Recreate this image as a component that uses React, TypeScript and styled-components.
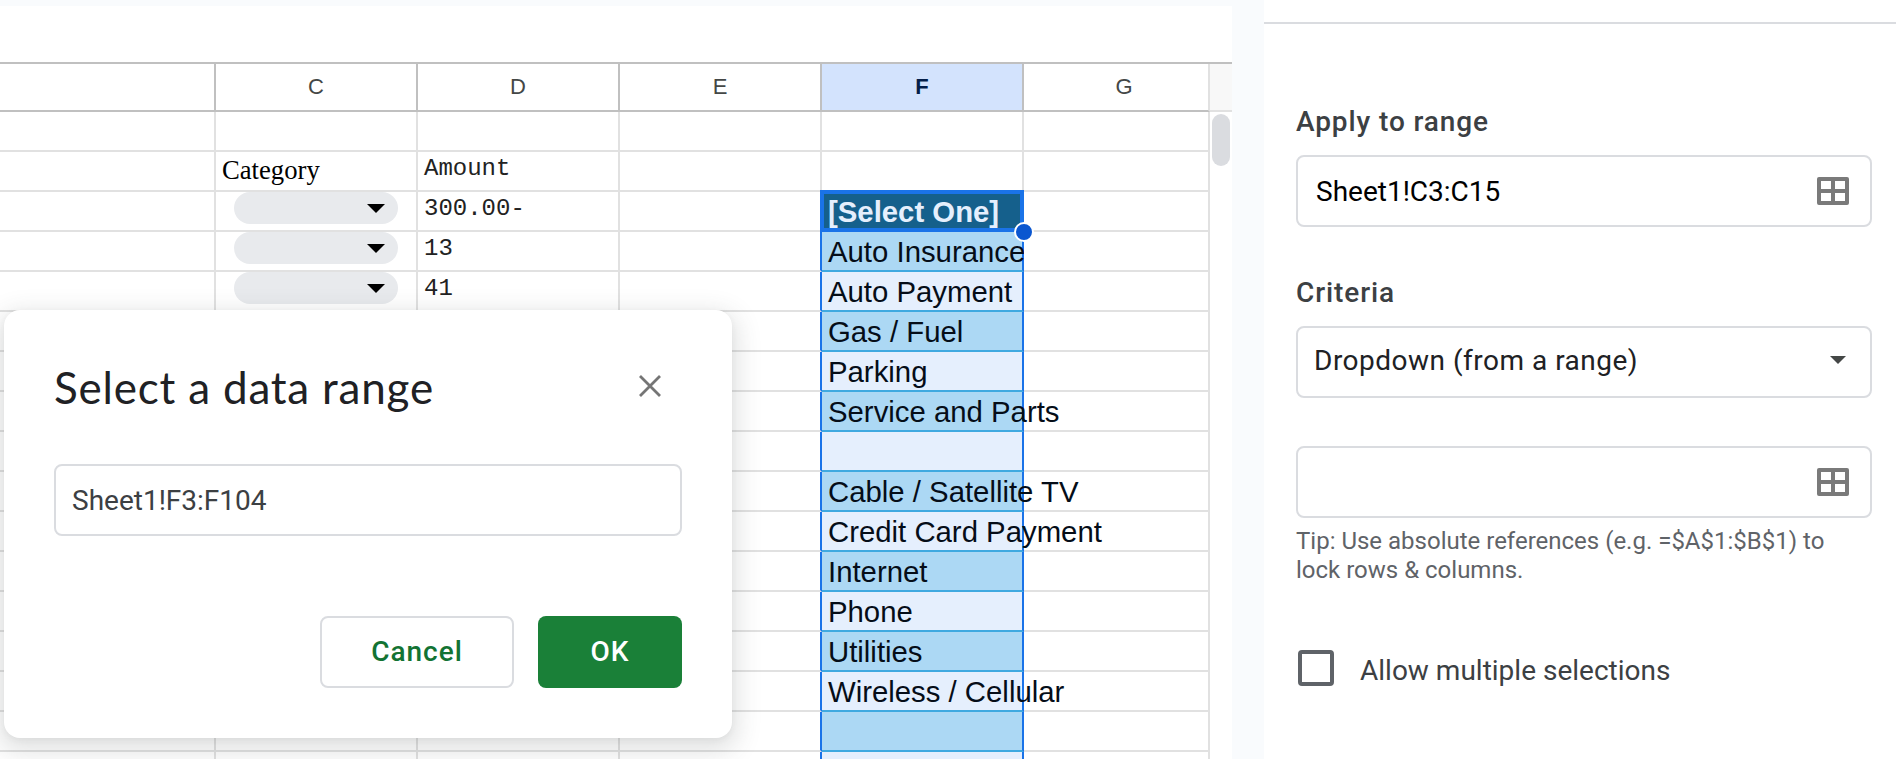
import React from 'react';
import styled, { createGlobalStyle, css } from 'styled-components';

const GlobalStyle = createGlobalStyle`
  * { box-sizing: border-box; }
  body { margin: 0; background: #fff; overflow: hidden; }
`;

const Page = styled.main`
  display: grid;
  grid-template-columns: 1232px 32px 632px;
  width: 1896px;
  height: 759px;
  overflow: hidden;
  position: relative;
  background: #f9fbfd;
  font-family: Roboto, 'Liberation Sans', sans-serif;
`;

const SheetArea = styled.section`
  grid-column: 1;
  height: 759px;
  overflow: hidden;
`;

const FormulaStrip = styled.div`
  height: 58px;
  margin-top: 6px;
  background: #fff;
  border-bottom: 2px solid #c0c0c0;
`;

const SheetBody = styled.div`
  display: grid;
  grid-template-columns: 1210px 22px;
`;

const columns = css`
  display: grid;
  grid-template-columns: 216px repeat(4, 202px) 186px;
  grid-template-rows: 100%;
`;

const HeaderRow = styled.div`
  ${columns}
  height: 48px;
  font: 22px 'Liberation Sans', Arial, sans-serif;
`;

const HeaderCell = styled.div<{ $active?: boolean; $last?: boolean }>`
  display: flex;
  align-items: center;
  justify-content: center;
  padding-left: ${(p) => (p.$last ? 16 : 0)}px;
  border-right: 2px solid ${(p) => (p.$last ? '#e1e1e1' : '#c0c0c0')};
  border-bottom: 2px solid #c0c0c0;
  background: ${(p) => (p.$active ? '#d3e3fd' : '#fff')};
  color: ${(p) => (p.$active ? '#041e49' : '#444746')};
  font-weight: ${(p) => (p.$active ? 700 : 400)};
`;

const Row = styled.div`
  ${columns}
  height: 40px;
`;

type Tone = 'plain' | 'head' | 'dark' | 'light';

const fills: Record<Tone, string> = {
  plain: '#fff',
  head: '#15608c',
  dark: '#acd8f4',
  light: '#e5effd',
};

const Cell = styled.div<{ $tone?: Tone; $edge?: boolean }>`
  position: relative;
  min-width: 0;
  white-space: nowrap;
  border-right: 2px solid ${(p) => (p.$edge || (p.$tone && p.$tone !== 'plain') ? '#1a73e8' : '#e1e1e1')};
  border-bottom: 2px solid ${(p) => (p.$tone === 'dark' || p.$tone === 'light' ? '#3fa9e0' : '#e1e1e1')};
  background: ${(p) => fills[p.$tone ?? 'plain']};
`;

const CellText = styled.span<{ $clip?: boolean; $bold?: boolean }>`
  position: relative;
  z-index: 1;
  display: block;
  width: ${(p) => (p.$clip ? '202px' : 'max-content')};
  overflow: ${(p) => (p.$clip ? 'hidden' : 'visible')};
  padding: 2px 0 0 6px;
  font: ${(p) => (p.$bold ? 700 : 400)} 29.33px/36px 'Liberation Sans', Arial, sans-serif;
  color: ${(p) => (p.$bold ? '#e5effd' : '#050d18')};
`;

const SerifText = styled.span`
  display: block;
  padding: 1px 0 0 6px;
  font: 26.67px/34px 'Liberation Serif', 'Times New Roman', serif;
  color: #000;
`;

const MonoText = styled.span`
  display: block;
  padding: 0 0 0 6px;
  font: 24px/34px 'Liberation Mono', 'Courier New', monospace;
  color: #222;
`;

const Chip = styled.div`
  display: flex;
  align-items: center;
  justify-content: flex-end;
  width: 164px;
  height: 32px;
  margin-left: 18px;
  padding-right: 13px;
  border-radius: 16px;
  background: #e8eaed;
`;

const ActiveFrame = styled.div`
  position: absolute;
  z-index: 2;
  left: -2px;
  top: -2px;
  width: 204px;
  height: 42px;
  border: 4px solid #1a73e8;
`;

const FillHandle = styled.div`
  position: absolute;
  right: -14px;
  bottom: -14px;
  width: 20px;
  height: 20px;
  border: 2px solid #fff;
  border-radius: 50%;
  background: #0b57d0;
`;

const ScrollColumn = styled.div`
  background: #fff;
`;

const ScrollHead = styled.div`
  height: 48px;
  background: #f8f8f8;
  border-bottom: 2px solid #e1e1e1;
`;

const ScrollThumb = styled.div`
  width: 18px;
  height: 52px;
  margin: 2px 0 0 2px;
  border-radius: 9px;
  background: #dadce0;
`;

const Dialog = styled.section`
  position: absolute;
  z-index: 5;
  left: 4px;
  top: 310px;
  width: 728px;
  height: 428px;
  padding: 0 50px;
  border-radius: 16px;
  background: #fff;
  box-shadow: 0 8px 24px 6px rgba(60, 64, 67, 0.15), 0 2px 6px rgba(60, 64, 67, 0.06);
`;

const DialogHeader = styled.header`
  display: flex;
  align-items: center;
  justify-content: space-between;
  height: 152px;
  margin-bottom: 2px;
  padding-right: 21px;
`;

const DialogTitle = styled.h1`
  margin: 2px 0 0;
  font: 400 44px/56px Lato, sans-serif;
  letter-spacing: 0.8px;
  color: #202124;
`;

const DialogActions = styled.footer`
  display: flex;
  justify-content: flex-end;
  gap: 24px;
  margin-top: 80px;
`;

const Button = styled.button<{ $primary?: boolean }>`
  width: ${(p) => (p.$primary ? 144 : 194)}px;
  height: 72px;
  padding: 0 0 1px;
  border: ${(p) => (p.$primary ? '0' : '2px solid #dadce0')};
  border-radius: 8px;
  background: ${(p) => (p.$primary ? '#1a8038' : '#fff')};
  color: ${(p) => (p.$primary ? '#fff' : '#137333')};
  font: 500 28px Roboto, sans-serif;
  letter-spacing: 1px;
`;

const Field = styled.div<{ $ink?: string; $inset?: number }>`
  display: flex;
  align-items: center;
  justify-content: space-between;
  height: 72px;
  padding: 0 21px 0 ${(p) => p.$inset ?? 18}px;
  border: 2px solid #dadce0;
  border-radius: 8px;
  background: #fff;
  font: 400 28px Roboto, sans-serif;
  color: ${(p) => p.$ink ?? '#000'};
`;

const SelectField = styled(Field)`
  padding: 0 24px 4px 16px;
  letter-spacing: 0.5px;
`;

const Panel = styled.aside`
  grid-column: 3;
  padding: 22px 24px 0 32px;
  background: linear-gradient(#dadce0, #dadce0) 0 22px / 100% 2px no-repeat #fff;
`;

const Label = styled.h2<{ $top: number }>`
  margin: ${(p) => p.$top}px 0 0;
  height: 53px;
  font: 500 28px/40px Roboto, sans-serif;
  letter-spacing: 0.9px;
  color: #3c4043;
`;

const RangeField = styled(Field)`
  margin-top: 48px;
`;

const Tip = styled.p`
  margin: 9px 0 0;
  font: 400 24px/29px Roboto, sans-serif;
  color: #5f6368;
`;

const CheckRow = styled.label`
  display: flex;
  align-items: flex-start;
  gap: 26px;
  margin: 65px 0 0 2px;
  font: 400 28px/36px Roboto, sans-serif;
  color: #3c4043;
`;

const CheckBox = styled.span`
  width: 36px;
  height: 36px;
  border: 4px solid #5f6368;
  border-radius: 4px;
`;

const CheckText = styled.span`
  margin-top: 3px;
`;

const GridIcon = () => (
  <svg width="32" height="28" viewBox="0 0 32 28">
    <path
      fill="#7a7a7a"
      fillRule="evenodd"
      d="M2 0h28a2 2 0 0 1 2 2v24a2 2 0 0 1-2 2H2a2 2 0 0 1-2-2V2a2 2 0 0 1 2-2ZM4 4v8h10V4ZM18 4v8h10V4ZM4 16v8h10v-8ZM18 16v8h10v-8Z"
    />
  </svg>
);

const Caret = ({ width, height, color }: { width: number; height: number; color: string }) => (
  <svg width={width} height={height} viewBox="0 0 18 9" preserveAspectRatio="none">
    <path d="M0 0H18L9 9Z" fill={color} />
  </svg>
);

const CloseIcon = () => (
  <svg width="22" height="22" viewBox="0 0 22 22">
    <path d="M1 1 21 21M21 1 1 21" stroke="#757575" strokeWidth="2.8" />
  </svg>
);

interface RowData {
  category?: string;
  chip?: boolean;
  amount?: string;
  option?: string;
  tone?: Tone;
  active?: boolean;
  clip?: boolean;
}

const rows: RowData[] = [
  {},
  { category: 'Category', amount: 'Amount' },
  { chip: true, amount: '300.00-', option: '[Select One]', tone: 'head', active: true },
  { chip: true, amount: '13', option: 'Auto Insurance', tone: 'dark', clip: true },
  { chip: true, amount: '41', option: 'Auto Payment', tone: 'light' },
  { option: 'Gas / Fuel', tone: 'dark' },
  { option: 'Parking', tone: 'light' },
  { option: 'Service and Parts', tone: 'dark' },
  { option: '', tone: 'light' },
  { option: 'Cable / Satellite TV', tone: 'dark' },
  { option: 'Credit Card Payment', tone: 'light' },
  { option: 'Internet', tone: 'dark' },
  { option: 'Phone', tone: 'light' },
  { option: 'Utilities', tone: 'dark' },
  { option: 'Wireless / Cellular', tone: 'light' },
  { option: '', tone: 'dark' },
  { option: '', tone: 'light' },
];

export default function App() {
  return (
    <>
      <GlobalStyle />
      <Page>
        <SheetArea>
          <FormulaStrip />
          <SheetBody>
            <div>
              <HeaderRow>
                {['', 'C', 'D', 'E', 'F', 'G'].map((name, i) => (
                  <HeaderCell key={i} $active={name === 'F'} $last={name === 'G'}>
                    {name}
                  </HeaderCell>
                ))}
              </HeaderRow>
              {rows.map((row, i) => (
                <Row key={i}>
                  <Cell />
                  <Cell>
                    {row.category && <SerifText>{row.category}</SerifText>}
                    {row.chip && (
                      <Chip>
                        <Caret width={18} height={9} color="#000" />
                      </Chip>
                    )}
                  </Cell>
                  <Cell>{row.amount && <MonoText>{row.amount}</MonoText>}</Cell>
                  <Cell $edge={!!row.tone} />
                  <Cell $tone={row.tone}>
                    {row.option && (
                      <CellText $clip={row.clip} $bold={row.active}>
                        {row.option}
                      </CellText>
                    )}
                    {row.active && (
                      <ActiveFrame>
                        <FillHandle />
                      </ActiveFrame>
                    )}
                  </Cell>
                  <Cell />
                </Row>
              ))}
            </div>
            <ScrollColumn>
              <ScrollHead />
              <ScrollThumb />
            </ScrollColumn>
          </SheetBody>
        </SheetArea>

        <Panel>
          <Label $top={80}>Apply to range</Label>
          <Field>
            <span>Sheet1!C3:C15</span>
            <GridIcon />
          </Field>
          <Label $top={46}>Criteria</Label>
          <SelectField $ink="#202124">
            <span>Dropdown (from a range)</span>
            <Caret width={16} height={8} color="#444746" />
          </SelectField>
          <RangeField>
            <span />
            <GridIcon />
          </RangeField>
          <Tip>
            Tip: Use absolute references (e.g. =$A$1:$B$1) to
            <br />
            lock rows &amp; columns.
          </Tip>
          <CheckRow>
            <CheckBox />
            <CheckText>Allow multiple selections</CheckText>
          </CheckRow>
        </Panel>

        <Dialog>
          <DialogHeader>
            <DialogTitle>Select a data range</DialogTitle>
            <CloseIcon />
          </DialogHeader>
          <Field $ink="#3c4043" $inset={16}>
            <span>Sheet1!F3:F104</span>
          </Field>
          <DialogActions>
            <Button>Cancel</Button>
            <Button $primary>OK</Button>
          </DialogActions>
        </Dialog>
      </Page>
    </>
  );
}
